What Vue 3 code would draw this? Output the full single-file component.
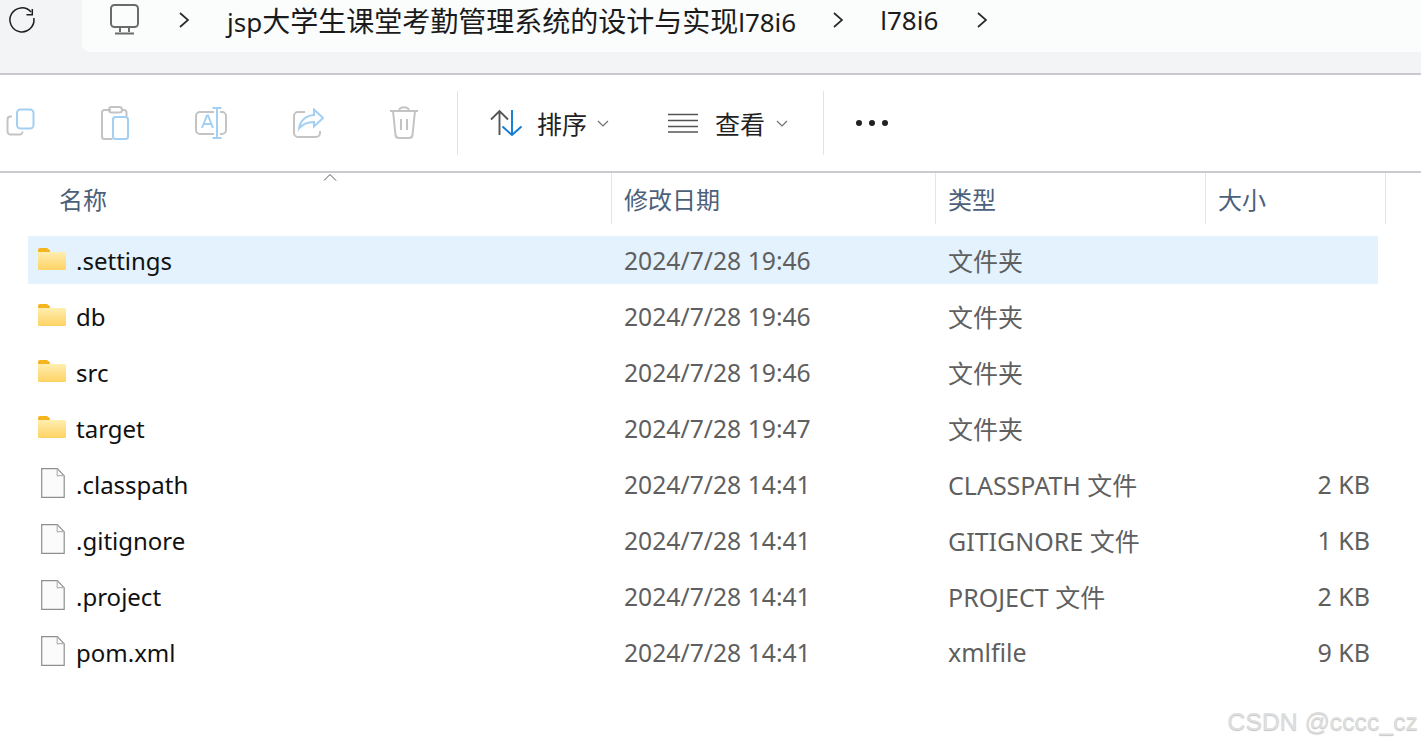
<template>
  <div class="explorer">
    <div class="topbar">
      <div class="refresh">
        <svg width="28" height="28" viewBox="0 0 28 28" fill="none" stroke="#1f1f1f" stroke-width="1.5">
          <path d="M24.800 12A12 12 0 1 1 22 6" />
          <path d="M23.300 3V8.700H17.500" />
        </svg>
      </div>
      <div class="address">
        <svg class="pc" width="32" height="32" viewBox="0 0 32 32" fill="none" stroke="#6b6b6b" stroke-width="2">
          <rect x="2" y="2" width="27" height="22" rx="3.5" />
          <path d="M11 24v5M20 24v5M6 30.5h19" />
        </svg>
        <svg class="chev first" width="12" height="16" viewBox="0 0 12 16" fill="none" stroke="#2a2a2a" stroke-width="1.7"><path d="M2 1l8 7-8 7" /></svg>
        <span class="crumb long">jsp<span class="cjk">大学生课堂考勤管理系统的设计与实现</span>l78i6</span>
        <svg class="chev" width="12" height="16" viewBox="0 0 12 16" fill="none" stroke="#2a2a2a" stroke-width="1.7"><path d="M2 1l8 7-8 7" /></svg>
        <span class="crumb short">l78i6</span>
        <svg class="chev" width="12" height="16" viewBox="0 0 12 16" fill="none" stroke="#2a2a2a" stroke-width="1.7"><path d="M2 1l8 7-8 7" /></svg>
      </div>
    </div>

    <div class="toolbar">
      <div class="actions">
        <!-- copy -->
        <svg width="30" height="30" viewBox="0 0 30 30" fill="none" stroke-width="2">
          <path d="M6 8.500h-1.500a3 3 0 0 0-3 3v12a3 3 0 0 0 3 3h9a3 3 0 0 0 3-3" stroke="#c4c4c4" />
          <rect x="11" y="1.500" width="16.500" height="19" rx="3.500" stroke="#a3d0f2" fill="#fff" />
        </svg>
        <!-- paste -->
        <svg width="30" height="34" viewBox="0 0 30 34" fill="none" stroke-width="2">
          <path d="M11 4H4.500a2.500 2.500 0 0 0-2.500 2.500v24a2.500 2.500 0 0 0 2.500 2.500h8M22 4h2a2.500 2.500 0 0 1 2.500 2.500v4" stroke="#c4c4c4" />
          <rect x="9" y="1" width="13" height="5.500" rx="2.500" stroke="#c4c4c4" />
          <rect x="13" y="11" width="15" height="22" rx="2.500" stroke="#a3d0f2" fill="#fff" />
        </svg>
        <!-- rename -->
        <svg width="34" height="32" viewBox="0 0 34 32" fill="none" stroke-width="2">
          <path d="M20 5H6a4 4 0 0 0-4 4v14a4 4 0 0 0 4 4h14M26 5h2a4 4 0 0 1 4 4v14a4 4 0 0 1-4 4h-2" stroke="#c4c4c4" />
          <path d="M8 21l5-12.500h1L19 21M9.800 17h7.400M23 1v30M18.500 1h9M18.500 31h9" stroke="#a3d0f2" />
        </svg>
        <!-- share -->
        <svg width="32" height="30" viewBox="0 0 32 30" fill="none" stroke-width="2">
          <path d="M13 4H6a4 4 0 0 0-4 4v17a4 4 0 0 0 4 4h18a4 4 0 0 0 4-4v-2" stroke="#c4c4c4" />
          <path d="M22 1.500l9 8.500-9 8.500v-4.500c-6 0-11 1.500-15 6.500 1-8 7-13 15-13.500z" stroke="#a3d0f2" fill="#fff" />
        </svg>
        <!-- delete -->
        <svg width="32" height="34" viewBox="-1 0 32 34" fill="none" stroke="#c4c4c4" stroke-width="2">
          <path d="M1 5h28M10 5c0-5 10-5 10 0M4 5l2.500 24a3.500 3.500 0 0 0 3.500 3h10a3.500 3.500 0 0 0 3.500-3L26 5M12 13v11M18 13v11" />
        </svg>
      </div>
      <div class="sep"></div>
      <div class="menu sort">
        <svg width="34" height="28" viewBox="0 0 34 28" fill="none" stroke-width="1.900">
          <path d="M9.500 26V2M1 10.500L9.500 2 18 10.500" stroke="#555" />
          <path d="M22 1v25M12.500 17.500L22 26l9.500-8.500" stroke="#0f7bd4" />
        </svg>
        <span>排序</span>
        <svg class="caret" width="12" height="8" viewBox="0 0 12 8" fill="none" stroke="#6f6f6f" stroke-width="1.200"><path d="M1 1l5 5 5-5" /></svg>
      </div>
      <div class="menu view">
        <svg width="30" height="20" viewBox="0 0 30 20" fill="none" stroke="#555" stroke-width="1.500">
          <path d="M0 1.500h30M0 7.500h30M0 13.500h30M0 19h30" />
        </svg>
        <span>查看</span>
        <svg class="caret" width="12" height="8" viewBox="0 0 12 8" fill="none" stroke="#6f6f6f" stroke-width="1.200"><path d="M1 1l5 5 5-5" /></svg>
      </div>
      <div class="sep"></div>
      <div class="more"><i></i><i></i><i></i></div>
    </div>

    <div class="list">
      <div class="head">
        <div class="col c-name">名称
          <svg class="sort-arrow" width="14" height="7" viewBox="0 0 14 7" fill="none" stroke="#555" stroke-width="1"><path d="M1 6.500l6-6 6 6" /></svg>
        </div>
        <div class="col c-date">修改日期</div>
        <div class="col c-type">类型</div>
        <div class="col c-size">大小</div>
      </div>
      <div v-for="file in files" :key="file.name" class="row" :class="{ selected: file.selected }">
        <div class="c-name cell-name">
          <svg v-if="file.folder" class="folder" width="28" height="22" viewBox="0 0 28 22">
            <path d="M0 2a2 2 0 0 1 2-2h7l3 2.500V6H0z" fill="#f6b51e" />
            <path d="M0 4h26.500a1.500 1.500 0 0 1 1.500 1.500V20.500a1.500 1.500 0 0 1-1.500 1.500H1.500A1.500 1.500 0 0 1 0 20.500z" fill="url(#fold)" />
            <defs>
              <linearGradient id="fold" x1="0" y1="0" x2="0" y2="1">
                <stop offset="0" stop-color="#ffeeb0" />
                <stop offset="1" stop-color="#fdd263" />
              </linearGradient>
            </defs>
          </svg>
          <svg v-else class="doc" width="24" height="30" viewBox="0 0 24 30">
            <path d="M.7.700h15.500l7 7V29.300H.7z" fill="#fbfbfb" stroke="#8e8e8e" stroke-width="1.200" />
            <path d="M16.200.700v7h7" fill="none" stroke="#b5b5b5" stroke-width="1.200" />
          </svg>
          <span>{{ file.name }}</span>
        </div>
        <div class="c-date muted">{{ file.date }}</div>
        <div class="c-type muted">{{ file.type }}</div>
        <div class="c-size muted">{{ file.size }}</div>
      </div>
    </div>

    <div class="watermark">CSDN @cccc_cz</div>
  </div>
</template>

<script setup>
const files = [
  { name: '.settings', date: '2024/7/28 19:46', type: '文件夹', size: '', folder: true, selected: true },
  { name: 'db', date: '2024/7/28 19:46', type: '文件夹', size: '', folder: true },
  { name: 'src', date: '2024/7/28 19:46', type: '文件夹', size: '', folder: true },
  { name: 'target', date: '2024/7/28 19:47', type: '文件夹', size: '', folder: true },
  { name: '.classpath', date: '2024/7/28 14:41', type: 'CLASSPATH 文件', size: '2 KB' },
  { name: '.gitignore', date: '2024/7/28 14:41', type: 'GITIGNORE 文件', size: '1 KB' },
  { name: '.project', date: '2024/7/28 14:41', type: 'PROJECT 文件', size: '2 KB' },
  { name: 'pom.xml', date: '2024/7/28 14:41', type: 'xmlfile', size: '9 KB' }
]
</script>

<style scoped>
.explorer {
  position: relative;
  width: 1421px;
  height: 749px;
  overflow: hidden;
  background: #fff;
  font-family: "Noto Sans", "Noto Sans CJK SC", sans-serif;
  font-size: 25px;
  color: #1b1b1b;
}

.topbar {
  display: flex;
  height: 73px;
  background: #f3f4f6;
  border-bottom: 2px solid #c9cacd;
}

.refresh {
  width: 82px;
  flex: none;
  padding: 6px 0 0 9px;
  box-sizing: border-box;
}

.address {
  flex: 1;
  height: 52px;
  display: flex;
  align-items: center;
  background: #fbfdfd;
  border-bottom-left-radius: 8px;
  padding: 0 0 12px 27px;
  box-sizing: border-box;
}

.pc { flex: none; margin-bottom: 3px; }
.chev { flex: none; }
.chev.first { margin-left: 37px; }

.crumb {
  font-size: 26px;
  white-space: nowrap;
}
.crumb .cjk { font-size: 28px; }
.crumb.long { margin: 0 36px 0 37px; }
.crumb.short { margin: 0 38px 0 36px; }

.toolbar {
  display: flex;
  align-items: center;
  height: 96px;
  border-bottom: 2px solid #c9cacd;
}

.actions {
  width: 457px;
  box-sizing: border-box;
  display: flex;
  align-items: center;
  gap: 64px;
  padding: 0 0 0 6px;
  flex: none;
}

.sep {
  width: 1px;
  height: 64px;
  background: #e3e3e3;
  flex: none;
}

.menu {
  display: flex;
  align-items: center;
  flex: none;
}
.menu span { font-size: 25px; color: #222; }
.sort { width: 210px; padding-left: 32px; box-sizing: border-box; }
.sort span { margin: 0 10px 0 13px; }
.view { width: 155px; }
.view span { margin: 0 11px 0 17px; }
.caret { margin-top: 1px; }

.more {
  display: flex;
  gap: 7px;
  margin-left: 32px;
}
.more i {
  width: 6px;
  height: 6px;
  border-radius: 50%;
  background: #222;
}

.head {
  position: relative;
  display: flex;
  height: 55px;
  margin-bottom: 8px;
  font-size: 24px;
  color: #4c607a;
}

.col {
  height: 51px;
  line-height: 53px;
  box-sizing: border-box;
  border-right: 1px solid #e5e5e5;
}

.sort-arrow {
  position: absolute;
  left: 323px;
  top: 1px;
}

.c-name { width: 612px; flex: none; box-sizing: border-box; }
.c-date { width: 324px; flex: none; box-sizing: border-box; padding-left: 12px; }
.c-type { width: 270px; flex: none; box-sizing: border-box; padding-left: 12px; }
.c-size { width: 180px; flex: none; box-sizing: border-box; }

.col.c-name { padding-left: 59px; }
.col.c-size { padding-left: 12px; }

.row {
  display: flex;
  align-items: center;
  height: 48px;
  margin: 0 43px 8px 0;
  background: #fff;
}
.row.selected {
  background: linear-gradient(to right, #fff 28px, #e3f2fd 28px);
}

.cell-name {
  display: flex;
  align-items: center;
  gap: 10px;
  padding-left: 38px;
  font-size: 24px;
  color: #111;
}
.folder { margin-bottom: 3px; }
.doc { margin: 0 1px 2px 3px; }

.muted { color: #5f5f5f; }
.row .c-date { font-size: 24.700px; }
.row .c-size {
  width: 164px;
  text-align: right;
}

.watermark {
  position: absolute;
  right: 3px;
  top: 708px;
  font-family: "Liberation Sans", sans-serif;
  font-size: 24.800px;
  color: #dedede;
  text-shadow: 0 1px 1px #c4c4c4;
}
</style>
